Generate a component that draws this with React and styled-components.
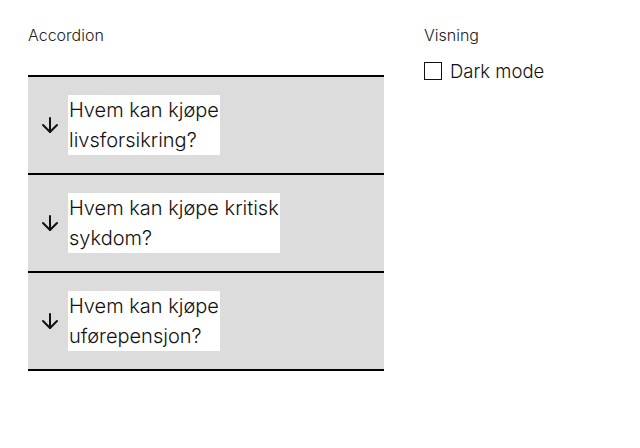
import React from 'react';
import styled, { createGlobalStyle } from 'styled-components';
import { ArrowDown } from 'lucide-react';

const questions = [
  { id: 1, lines: ['Hvem kan kjøpe', 'livsforsikring?'] },
  { id: 2, lines: ['Hvem kan kjøpe kritisk', 'sykdom?'] },
  { id: 3, lines: ['Hvem kan kjøpe', 'uførepensjon?'] },
];

const App = () => {
  return (
    <Page>
      <GlobalStyle />
      <Section>
        <Label>Accordion</Label>
        <List>
          {questions.map((q) => {
            return (
              <Item key={q.id}>
                <Trigger type="button">
                  <ArrowDown size={24} strokeWidth={2} />
                  <Title>
                    {q.lines[0]}
                    <br />
                    {q.lines[1]}
                  </Title>
                </Trigger>
              </Item>
            );
          })}
        </List>
      </Section>
      <Side>
        <Label>Visning</Label>
        <Check>
          <Box type="checkbox" />
          Dark mode
        </Check>
      </Side>
    </Page>
  );
};

const GlobalStyle = createGlobalStyle`
  body {
    margin: 0;
    background: #fff;
    font-family: Inter, "Liberation Sans", sans-serif;
    color: #111;
  }
`;

const Page = styled.main`
  display: flex;
  gap: 40px;
  padding: 25px 28px;
`;

const Section = styled.section`
  width: 356px;
`;

const Side = styled.section`
  display: flex;
  flex-direction: column;
  gap: 14px;
`;

const Label = styled.h3`
  margin: 0;
  font-size: 16px;
  font-weight: 300;
  line-height: 20px;
  color: #222;
`;

const List = styled.div`
  margin-top: 30px;
  border-top: 2px solid #000;
`;

const Item = styled.div`
  background: #dcdcdc;
  border-bottom: 2px solid #000;
`;

const Trigger = styled.button`
  display: flex;
  align-items: center;
  gap: 6px;
  width: 100%;
  height: 96px;
  padding: 0 10px;
  border: 0;
  background: none;
  font: inherit;
  color: #111;
  text-align: left;
  cursor: pointer;
  svg {
    flex-shrink: 0;
  }
`;

const Title = styled.span`
  display: block;
  width: max-content;
  padding: 0 1px;
  background: #fff;
  font-size: 20px;
  line-height: 30px;
  font-weight: 300;
`;

const Check = styled.label`
  display: flex;
  align-items: center;
  gap: 8px;
  font-size: 18.5px;
  font-weight: 300;
  line-height: 24px;
`;

const Box = styled.input`
  appearance: none;
  width: 18px;
  height: 18px;
  margin: 0;
  border: 1.5px solid #111;
  background: #fff;
`;

export default App;
